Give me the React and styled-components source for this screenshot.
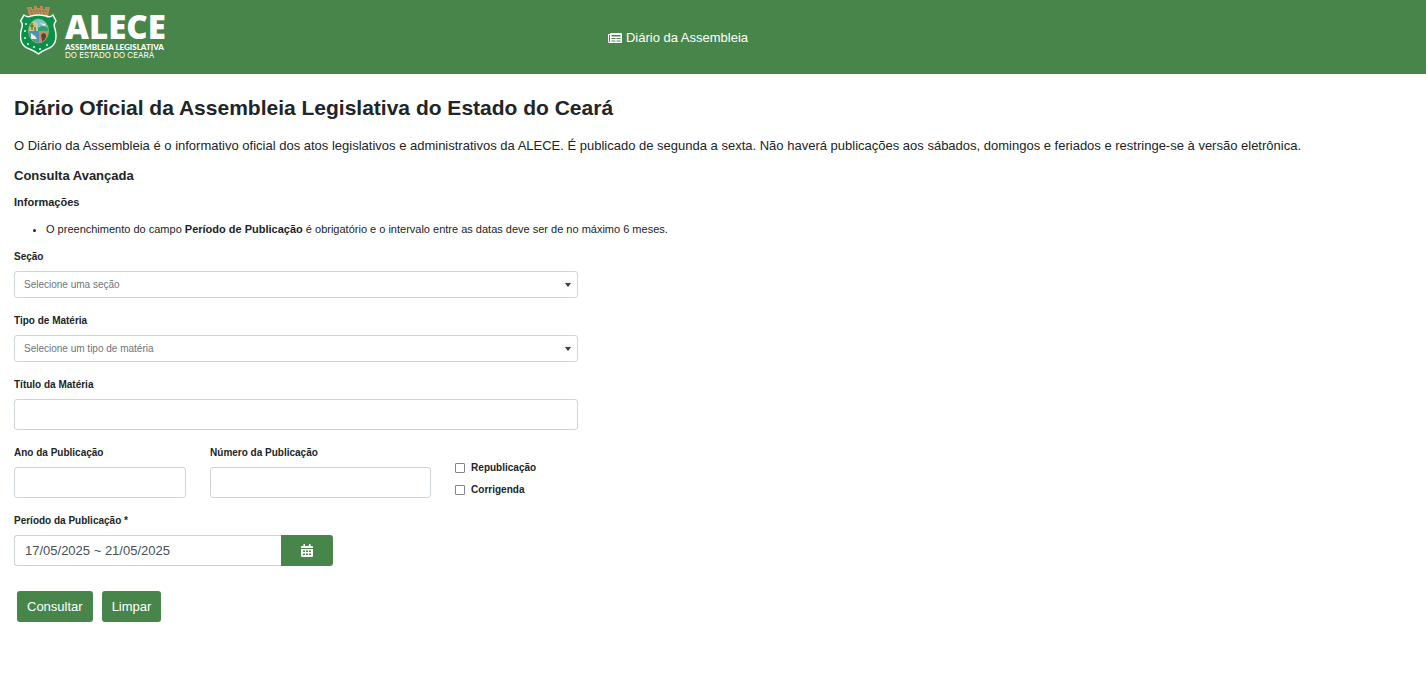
import React, { useState } from "react";
import styled, { createGlobalStyle } from "styled-components";

const GREEN = "#48854b";

const GlobalStyle = createGlobalStyle`
  *, *::before, *::after {
    box-sizing: border-box;
  }

  body {
    margin: 0;
    background: #fff;
    color: #212529;
    font-family: "Liberation Sans", Arial, sans-serif;
    font-size: 13px;
    line-height: 20px;
  }
`;

const Header = styled.header`
  display: grid;
  grid-template-columns: 1fr auto 1fr;
  align-items: center;
  height: 74px;
  padding: 0 90px 0 20px;
  background: ${GREEN};
`;

const Brand = styled.a`
  display: flex;
  align-self: start;
  gap: 8px;
  padding-top: 6px;
  color: #fff;
  text-decoration: none;
`;

const BrandText = styled.span`
  display: flex;
  flex-direction: column;
  padding-top: 4px;
  white-space: nowrap;
`;

const BrandName = styled.span`
  font-family: "Open Sans", sans-serif;
  font-size: 33px;
  font-weight: 800;
  line-height: 33px;
`;

const BrandLine = styled.span`
  font-family: ${({ $bold }) => ($bold ? "Lato" : "Inter")}, sans-serif;
  font-size: 8px;
  font-weight: ${({ $bold }) => ($bold ? 900 : 400)};
  line-height: 8px;
`;

const NavLink = styled.a`
  display: flex;
  align-items: center;
  gap: 4px;
  padding-top: 2px;
  color: #fff;
  text-decoration: none;
`;

const Intro = styled.section`
  padding: 21px 14px 0;
`;

const Title = styled.h1`
  margin: 0 0 16px;
  font-size: 21px;
  line-height: 25px;
`;

const Text = styled.p`
  margin: 0 0 10px;
`;

const Subtitle = styled.h2`
  margin: 0 0 8px;
  font-size: 13px;
  line-height: 20px;
`;

const InfoTitle = styled.h3`
  margin: 0 0 10px;
  font-size: 11px;
  line-height: 16px;
`;

const InfoList = styled.ul`
  margin: 0;
  padding-left: 32px;
  font-size: 11px;
  line-height: 18px;
`;

const Form = styled.form`
  display: grid;
  grid-template-columns: repeat(12, 1fr);
  column-gap: 24px;
  row-gap: 15px;
  width: 41.6667%;
  min-width: 500px;
  padding: 11px 16px 0 14px;
`;

const Field = styled.div`
  grid-column: span ${({ $span }) => $span || 12};
  display: flex;
  flex-direction: column;
  gap: 7px;
  min-width: 0;
`;

const Label = styled.label`
  font-size: 10px;
  font-weight: 700;
  line-height: 15px;
`;

const Control = styled.input`
  width: 100%;
  min-width: 0;
  height: 31px;
  padding: 0 10px;
  border: 1px solid #ced4da;
  border-radius: 3px;
  background: #fff;
  color: #495057;
  font: inherit;
`;

const SelectBox = styled.div`
  position: relative;
  display: flex;

  &::after {
    content: "";
    position: absolute;
    top: 12px;
    right: 7px;
    border: 3px solid transparent;
    border-top: 4px solid #343a40;
    border-bottom: 0;
    pointer-events: none;
  }
`;

const Select = styled(Control)`
  height: 27px;
  padding: 0 9px;
  appearance: none;
  color: #6c757d;
  font-size: 10px;
`;

const Checks = styled.div`
  grid-column: span 3;
  display: flex;
  flex-direction: column;
  gap: 7px;
  padding-top: 15px;
`;

const Check = styled.div`
  display: flex;
  align-items: center;
  gap: 6px;
`;

const CheckBox = styled.input`
  appearance: none;
  width: 10px;
  height: 10px;
  margin: 0;
  border: 1px solid #858585;
  border-radius: 1px;
  background: #fff;

  &:checked {
    background: ${GREEN};
  }
`;

const InputGroup = styled.div`
  display: flex;

  ${Control} {
    flex: 1;
    border-right: 0;
    border-radius: 3px 0 0 3px;
  }
`;

const Button = styled.button`
  height: 31px;
  padding: 0 10px;
  border: 0;
  border-radius: 3px;
  background: ${GREEN};
  color: #fff;
  font: inherit;
  cursor: pointer;
`;

const CalendarButton = styled(Button)`
  display: flex;
  align-items: center;
  justify-content: center;
  width: 52px;
  border-radius: 0 3px 3px 0;
`;

const Actions = styled.div`
  grid-column: span 12;
  display: flex;
  gap: 9px;
  padding: 10px 3px;
`;

const Crest = () => (
  <svg width="37" height="50" viewBox="0 0 37 50" aria-hidden="true">
    <path d="M7 1h5v2h2V0h3v2h3V0h3v3h2V1h5l-2 9H9z" fill="#b98b54" />
    <path d="M10 5h17M11 8h15" stroke="#8d6a40" strokeDasharray="2 1" />
    <path
      d="M4 9q4 3 7 1 7-2 15 0 4 2 7-1l3 6q-3 3-1 8 2 7 0 13-2 5-8 7-5 2-8.500 5-4-3-9-5-6-2-8-7-2-6 0-13 2-5-1-8z"
      fill="#07914a"
      stroke="#f4f7f4"
      strokeWidth="1.500"
    />
    <clipPath id="oval">
      <ellipse cx="18.500" cy="25" rx="10" ry="12" />
    </clipPath>
    <g clipPath="url(#oval)">
      <path d="M8 12h21v13H8z" fill="#82c4cd" />
      <path d="M8 17l5-3 5 4v8H8z" fill="#c7c989" />
      <path d="M8 25h11v13H8z" fill="#4993b5" />
      <path d="M19 25h10v13H19z" fill="#c58e65" />
      <path d="M12 17v7M10 20h4M15 21v4" stroke="#777436" strokeWidth="1.500" />
      <path d="M18 22q4-4 10 0v3H18z" fill="#359b70" />
      <path d="M20 17l4 1 3-1-3 3z" fill="#edf4ec" />
      <path d="M11 27l4 3 2 3h-6z" fill="#f0ede2" />
      <path d="M21 29q3-4 5 0v3l-2 3v3h-2v-4z" fill="#594634" />
    </g>
    <ellipse cx="18.500" cy="25" rx="10" ry="12" fill="none" stroke="#8fae62" />
    <g fill="#e7f5e6">
      <circle cx="6" cy="18" r="1" />
      <circle cx="5" cy="25" r="1" />
      <circle cx="5" cy="32" r="1" />
      <circle cx="8" cy="38" r="1" />
      <circle cx="14" cy="41" r="1" />
      <circle cx="20" cy="43" r="1" />
      <circle cx="27" cy="39" r="1" />
    </g>
  </svg>
);

const NewspaperIcon = () => (
  <svg width="14" height="10" viewBox="0 0 14 10" aria-hidden="true">
    <path
      fill="#fff"
      fillRule="evenodd"
      d="M3 0h10q1 0 1 1v8q0 1-1 1H1.500Q0 10 0 8.500V2q0-1 1-1h1q0-1 1-1zM1 2v6.500q0 .5.5.5t.5-.5V2zM3.500 2v1.500H12.500V2zM3.500 5v1h4V5zM8.500 5v1h4V5zM3.500 7.500v1h4v-1zM8.500 7.500v1h4v-1z"
    />
  </svg>
);

const CalendarIcon = () => (
  <svg width="12" height="13" viewBox="0 0 12 13" aria-hidden="true">
    <path
      fill="#fff"
      fillRule="evenodd"
      d="M2.500 0h1.500v2h4V0h1.500v2H11q1 0 1 1v1H0V3q0-1 1-1h1.500zM0 5h12v7q0 1-1 1H1q-1 0-1-1zM2 6.500V8h2V6.500zM5 6.500V8h2V6.500zM8 6.500V8h2V6.500zM2 9.500V11h2V9.500zM5 9.500V11h2V9.500zM8 9.500V11h2V9.500z"
    />
  </svg>
);

const SelectField = ({ id, label, placeholder }) => (
  <Field>
    <Label htmlFor={id}>{label}</Label>
    <SelectBox>
      <Select as="select" id={id} defaultValue="">
        <option value="">{placeholder}</option>
      </Select>
    </SelectBox>
  </Field>
);

const TextField = ({ id, label, span }) => (
  <Field $span={span}>
    <Label htmlFor={id}>{label}</Label>
    <Control id={id} type="text" />
  </Field>
);

const CheckField = ({ id, label }) => (
  <Check>
    <CheckBox id={id} type="checkbox" />
    <Label htmlFor={id}>{label}</Label>
  </Check>
);

const App = () => {
  const [period, setPeriod] = useState("17/05/2025 ~ 21/05/2025");

  return (
    <>
      <GlobalStyle />
      <Header>
        <Brand href="#">
          <Crest />
          <BrandText>
            <BrandName>ALECE</BrandName>
            <BrandLine $bold>ASSEMBLEIA LEGISLATIVA</BrandLine>
            <BrandLine>DO ESTADO DO CEARÁ</BrandLine>
          </BrandText>
        </Brand>
        <NavLink href="#">
          <NewspaperIcon />
          Diário da Assembleia
        </NavLink>
      </Header>
      <main>
        <Intro>
          <Title>
            Diário Oficial da Assembleia Legislativa do Estado do Ceará
          </Title>
          <Text>
            O Diário da Assembleia é o informativo oficial dos atos legislativos
            e administrativos da ALECE. É publicado de segunda a sexta. Não
            haverá publicações aos sábados, domingos e feriados e restringe-se à
            versão eletrônica.
          </Text>
          <Subtitle>Consulta Avançada</Subtitle>
          <InfoTitle>Informações</InfoTitle>
          <InfoList>
            <li>
              O preenchimento do campo <b>Período de Publicação</b> é
              obrigatório e o intervalo entre as datas deve ser de no máximo 6
              meses.
            </li>
          </InfoList>
        </Intro>
        <Form onSubmit={(e) => e.preventDefault()}>
          <SelectField
            id="secao"
            label="Seção"
            placeholder="Selecione uma seção"
          />
          <SelectField
            id="tipo"
            label="Tipo de Matéria"
            placeholder="Selecione um tipo de matéria"
          />
          <TextField id="titulo" label="Título da Matéria" />
          <TextField id="ano" label="Ano da Publicação" span={4} />
          <TextField id="numero" label="Número da Publicação" span={5} />
          <Checks>
            <CheckField id="republicacao" label="Republicação" />
            <CheckField id="corrigenda" label="Corrigenda" />
          </Checks>
          <Field $span={7}>
            <Label htmlFor="periodo">Período da Publicação *</Label>
            <InputGroup>
              <Control
                id="periodo"
                type="text"
                value={period}
                onChange={(e) => setPeriod(e.target.value)}
              />
              <CalendarButton type="button" aria-label="Abrir calendário">
                <CalendarIcon />
              </CalendarButton>
            </InputGroup>
          </Field>
          <Actions>
            <Button type="submit">Consultar</Button>
            <Button type="button" onClick={() => setPeriod("")}>
              Limpar
            </Button>
          </Actions>
        </Form>
      </main>
    </>
  );
};

export default App;
